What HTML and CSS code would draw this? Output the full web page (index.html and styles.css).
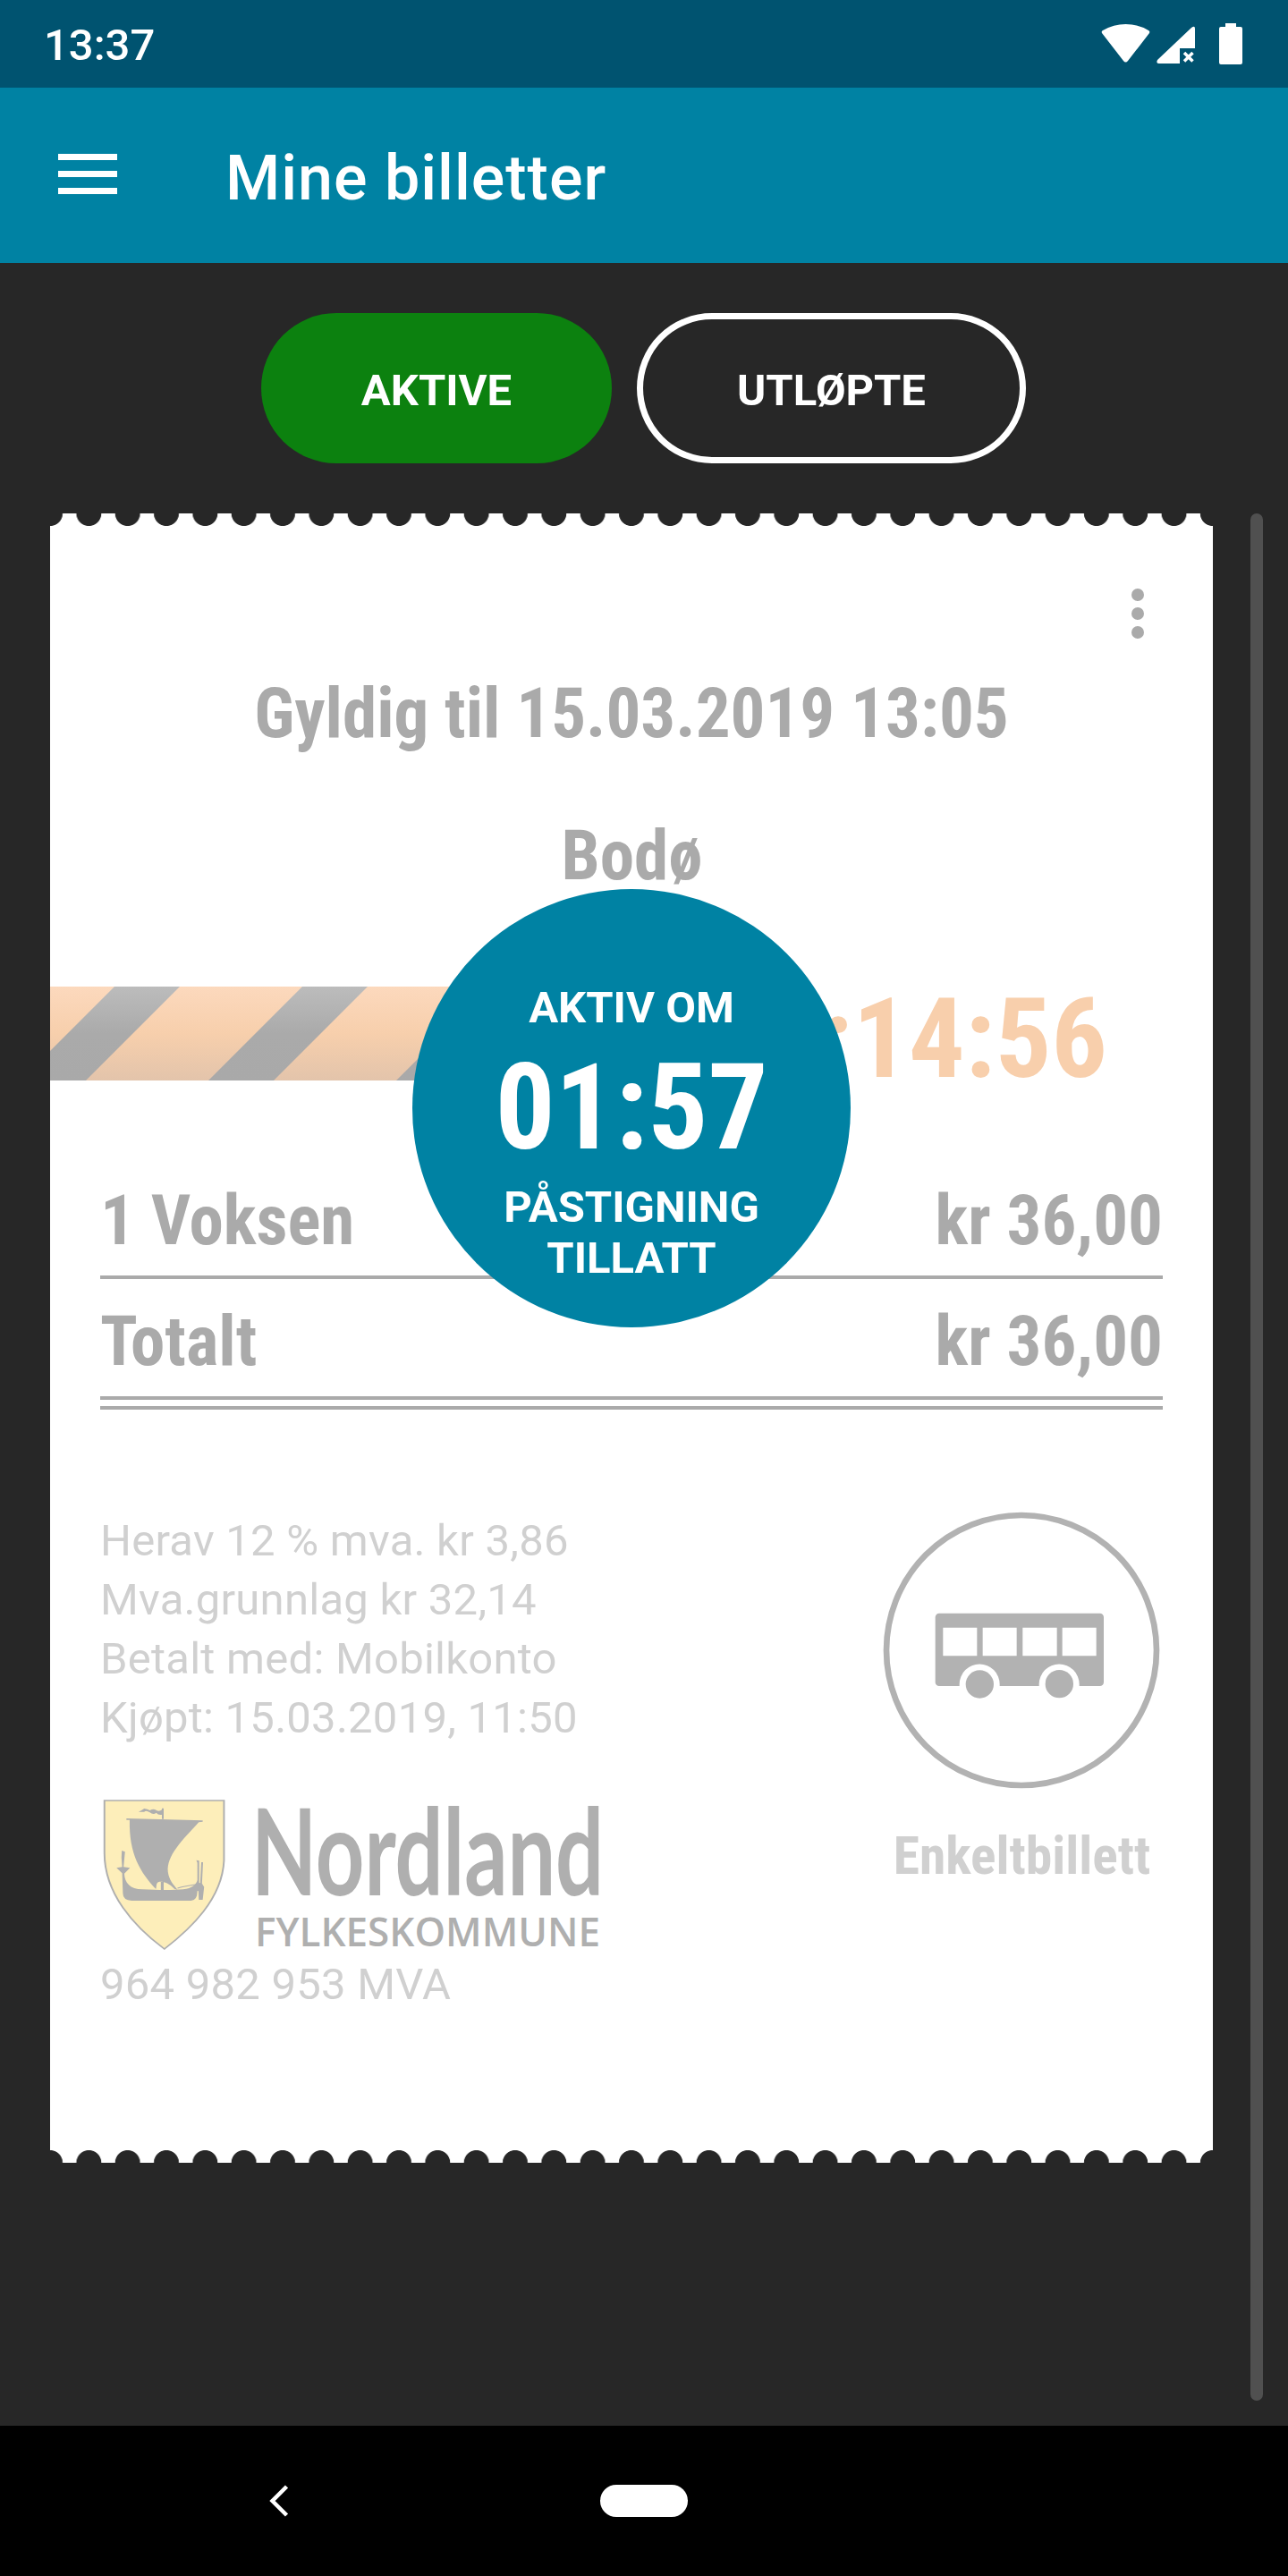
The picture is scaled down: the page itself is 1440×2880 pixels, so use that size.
FILE: index.html
```html
<!DOCTYPE html>
<html lang="no">
<head>
<meta charset="utf-8">
<title>Mine billetter</title>
<link rel="stylesheet" href="styles.css">
</head>
<body>
<div class="status">
  <span class="clock">13:37</span>
  <svg class="status-icons" width="160" height="50" viewBox="0 0 160 50" fill="#fff">
    <path d="M2 12Q1 10 3 9Q15 2 28.500 2Q42 2 54 9Q56 10 55 12L31 43Q28.500 46 26 43Z"/>
    <path d="M106 29H89V46H66Q62 46 64 42L102 6Q106 3 106 7Z"/>
    <path d="M94 34L103.500 43.500M103.500 34L94 43.500" stroke="#fff" stroke-width="3.500"/>
    <path d="M133 5H140V1H152V5H157Q159 5 159 7V45Q159 47 157 47H135Q133 47 133 45V7Q133 5 135 5Z"/>
  </svg>
</div>
<header class="appbar">
  <div class="burger"><i></i><i></i><i></i></div>
  <h1>Mine billetter</h1>
</header>
<main class="content">
  <nav class="tabs">
    <span class="tab tab-on">AKTIVE</span>
    <span class="tab tab-off">UTLØPTE</span>
  </nav>
  <div class="scroll">
    <article class="ticket">
      <svg class="more" width="14" height="56" viewBox="0 0 14 56" fill="#aaa"><circle cx="7" cy="7" r="7"/><circle cx="7" cy="28" r="7"/><circle cx="7" cy="49" r="7"/></svg>
      <div class="heading cond">Gyldig til 15.03.2019 13:05</div>
      <div class="heading place cond">Bodø</div>
      <div class="band">
        <svg width="500" height="105" viewBox="0 0 500 105">
          <defs>
            <linearGradient id="peach" x1="0" y1="0" x2="0" y2="1"><stop offset="0" stop-color="#fcd9bd"/><stop offset=".5" stop-color="#f7cfac"/><stop offset="1" stop-color="#e3c4ab"/></linearGradient>
            <linearGradient id="ash" gradientUnits="userSpaceOnUse" x1="0" y1="0" x2="0" y2="105"><stop offset="0" stop-color="#bcbcbc"/><stop offset=".5" stop-color="#aaa"/><stop offset="1" stop-color="#a9a9a9"/></linearGradient>
          </defs>
          <path fill="url(#peach)" d="M0 0H500V105H0Z"/>
          <path fill="url(#ash)" d="M72 0H145L40 105H-33ZM282 0H355L250 105H177ZM492 0H565L460 105H387Z"/>
        </svg>
        <span class="remaining cond">:14:56</span>
      </div>
      <div class="rows cond">
        <div class="row"><span>1 Voksen</span><span>kr 36,00</span></div>
        <div class="row"><span>Totalt</span><span>kr 36,00</span></div>
        <div class="rule"></div>
      </div>
      <div class="lower">
        <div class="details">
          <div>Herav 12 % mva. kr 3,86</div>
          <div>Mva.grunnlag kr 32,14</div>
          <div>Betalt med: Mobilkonto</div>
          <div>Kjøpt: 15.03.2019, 11:50</div>
          <div class="brand">
            <svg class="shield" width="142" height="172" viewBox="56 60 358 516" preserveAspectRatio="none" fill="#afafaf">
              <path d="M68 69H405V270C400 400 310 500 237 567C150 490 68 380 68 245Z" fill="#fdeeba" stroke="#afafaf" stroke-width="5"/>
              <path d="M130 129L345 136V140L334 142C285 205 243 255 247 308C250 335 262 350 274 368L266 366C250 345 235 340 223 341C212 345 216 355 213 366C170 310 137 250 139 134H130Z"/>
              <path d="M230 95H235V131H230ZM227 342H235V370H227Z"/>
              <path d="M164 107Q172 103 180 96Q190 97 196 102Q208 94 216 103Q224 106 231 99V116Q221 120 214 110Q206 118 196 109Q186 101 180 107Z"/>
              <path d="M117 237L126 241L122 292L140 295L124 314C125 345 140 366 175 367C220 370 265 370 290 367C315 363 328 350 330 335V278L327 269L335 271V345L338 346L341 276H346L343 347L349 359L345 402H334L333 373L330 372Q330 404 312 405H145Q120 403 120 380L118 313L102 295L118 292L116 260Z"/>
              <path d="M274 363Q295 355 328 350" fill="none" stroke="#afafaf" stroke-width="3"/>
            </svg>
            <svg class="wordmark" width="390" height="172" viewBox="0 0 390 172" fill="#afafaf">
              <text class="county" x="-8" y="109" textLength="394" lengthAdjust="spacingAndGlyphs">Nordland</text>
              <text class="council" x="-4" y="166" textLength="386" lengthAdjust="spacingAndGlyphs">FYLKESKOMMUNE</text>
            </svg>
          </div>
          <div class="orgno">964 982 953 MVA</div>
        </div>
        <div class="kind">
          <svg width="310" height="310" viewBox="82 61 930 930" fill="#b2b2b2">
            <circle cx="547" cy="526" r="453" fill="none" stroke="#b2b2b2" stroke-width="20"/>
            <rect x="258" y="402" width="565" height="244" rx="13"/>
            <path fill="#fff" d="M284 450H398V545H284ZM417 450H531V545H417ZM551 450H666V545H551ZM684 450H798V545H684Z"/>
            <path fill="#fff" d="M339 648V640A67.500 67.500 0 0 1 474 640V648ZM606 648V640A67.500 67.500 0 0 1 741 640V648Z"/>
            <circle cx="407" cy="640" r="47"/><circle cx="674" cy="639" r="47"/>
          </svg>
          <div class="kind-name cond">Enkeltbillett</div>
        </div>
      </div>
      <div class="countdown">
        <div>AKTIV OM</div>
        <div class="minutes cond">01:57</div>
        <div>PÅSTIGNING</div>
        <div>TILLATT</div>
      </div>
    </article>
    <div class="scrollbar"></div>
  </div>
</main>
<footer class="navbar">
  <svg width="22" height="36" viewBox="0 0 22 36" fill="none" stroke="#fff" stroke-width="4.500"><path d="M19.500 2L3.500 18L19.500 34"/></svg>
  <span class="pill"></span>
</footer>
</body>
</html>
```
FILE: styles.css
```css
* { box-sizing: border-box; }
body {
  margin: 0;
  width: 1440px;
  height: 2880px;
  display: flex;
  flex-direction: column;
  background: #272727;
  color: #fff;
  font-family: Roboto, "Liberation Sans", sans-serif;
}
.cond {
  font-family: "Roboto Condensed", Roboto, sans-serif;
  font-stretch: 75%;
  font-weight: 700;
}
.status {
  height: 98px;
  background: #005370;
  display: flex;
  justify-content: space-between;
  padding: 25px 50px 0 49px;
}
.clock { font-size: 49px; line-height: 52px; font-weight: 500; }
.appbar {
  height: 196px;
  background: #0082a3;
  display: flex;
  align-items: center;
  padding-left: 65px;
}
.burger { display: grid; gap: 12px; width: 66px; margin: 0 121px 3px 0; }
.burger i { height: 7px; background: #fff; }
h1 { margin: 6px 0 0; font-size: 70px; line-height: 84px; font-weight: 500; letter-spacing: 1px; }
.content { flex: 1; padding-top: 56px; }
.tabs { display: flex; justify-content: center; gap: 28px; height: 168px; padding-right: 1px; }
.tab {
  display: flex;
  align-items: center;
  justify-content: center;
  border-radius: 84px;
  font-size: 49px;
  font-weight: 700;
  padding-top: 4px;
}
.tab-on { width: 392px; background: #0c810f; }
.tab-off { width: 435px; border: 7px solid #fff; }
.scroll { display: flex; margin-top: 56px; padding-left: 56px; gap: 42px; }
.ticket {
  position: relative;
  width: 1300px;
  height: 1844px;
  padding-top: 84px;
  display: flex;
  flex-direction: column;
  color: #aaa;
  background:
    radial-gradient(circle at 50% 0, #272727 13.600px, transparent 14.400px) -21.670px 0 / 43.333px 14px repeat-x,
    radial-gradient(circle at 50% 100%, #272727 13.600px, transparent 14.400px) -21.670px 100% / 43.333px 14px repeat-x,
    #fff;
}
.more { align-self: flex-end; margin-right: 77px; }
.heading { margin-top: 39px; font-size: 77px; line-height: 90px; text-align: center; }
.place { margin-top: 69px; padding-left: 1px; }
.band { display: flex; justify-content: space-between; height: 105px; margin-top: 101px; padding-right: 118px; }
.remaining { font-size: 124px; line-height: 105px; padding-top: 6px; color: #f8cfac; }
.rows { margin: 87px 56px 0; font-size: 77px; }
.row {
  display: flex;
  justify-content: space-between;
  height: 135px;
  padding-top: 9px;
  line-height: 123px;
  border-bottom: 4px solid #aaa;
}
.rule { height: 4px; margin-top: 7px; background: #aaa; }
.lower { display: flex; justify-content: space-between; margin: 113px 56px 0; }
.details { padding-top: 1px; font-size: 49px; line-height: 66px; letter-spacing: .25px; color: #d0d0d0; }
.brand { display: flex; gap: 35px; height: 172px; margin-top: 56px; letter-spacing: 0; }
.wordmark { overflow: visible; }
.county { font-family: Lato, sans-serif; font-size: 134px; font-weight: 700; }
.council { font-family: "Open Sans", sans-serif; font-size: 46px; font-weight: 600; }
.orgno { margin-top: 4px; }
.kind { width: 315px; padding-top: 1px; text-align: center; }
.kind svg { display: block; margin: 0 auto 0 2px; }
.kind-name { margin-top: 40px; font-size: 59.500px; line-height: 70px; color: #d0d0d0; }
.countdown {
  position: absolute;
  left: 405px;
  top: 420px;
  width: 490px;
  height: 490px;
  border-radius: 50%;
  background: #0082a3;
  color: #fff;
  text-align: center;
  font-size: 49px;
  line-height: 57px;
  font-weight: 700;
  padding-top: 104px;
}
.minutes { font-size: 133px; line-height: 156px; margin: 6px 0 4px; }
.scrollbar { width: 14px; height: 2110px; border-radius: 7px; background: #505050; }
.navbar {
  height: 168px;
  background: #000;
  display: flex;
  align-items: center;
  padding-left: 301px;
  gap: 348px;
}
.pill { width: 98px; height: 36px; border-radius: 18px; background: #fff; }
```
